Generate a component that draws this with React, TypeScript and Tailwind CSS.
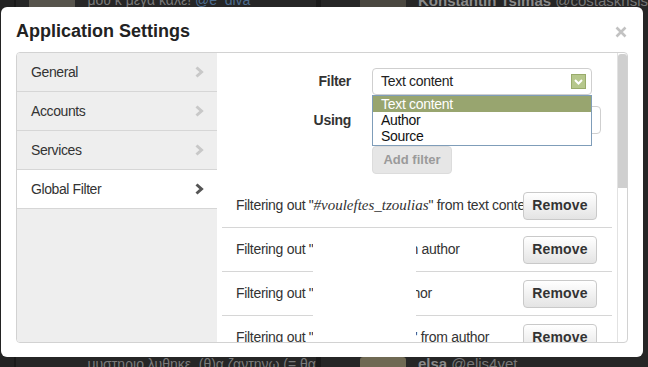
import React from 'react';

const font = "font-['Liberation_Sans',Arial,sans-serif]";

const menu = [
  { label: 'General', active: false },
  { label: 'Accounts', active: false },
  { label: 'Services', active: false },
  { label: 'Global Filter', active: true },
];

const filters = [
  { head: 'Filtering out "', term: '#vouleftes_tzoulias', tail: '" from text content', pad: '' },
  { head: 'Filtering out "', term: '', tail: 'n author', pad: 'pl-[97px]' },
  { head: 'Filtering out "', term: '', tail: 'hor', pad: 'pl-[99px]' },
  { head: 'Filtering out "', term: '', tail: '" from author', pad: 'pl-[99px]' },
];

const Chevron: React.FC<{ active: boolean }> = ({ active }) => (
  <svg width="9" height="12" viewBox="0 0 9 12">
    <path d="M1.5 1.5 L6.5 6 L1.5 10.5" fill="none" stroke={active ? '#555' : '#c8c8c8'} strokeWidth="3" />
  </svg>
);

const Avatar: React.FC<{ className?: string }> = ({ className }) => (
  <div className={`w-[46px] h-[46px] rounded-[3px] shrink-0 ${className ?? ''}`} />
);

const App: React.FC = () => {
  return (
    <div className={`relative w-[648px] h-[367px] overflow-hidden bg-[#1f1f1f] ${font}`}>
      {/* dimmed page behind the dialog */}
      <div className="flex h-full">
        <div className="w-[24px] bg-[#232323]" />
        <div className="w-[5px] bg-[#1a1a1a]" />
        <div className="w-[326px] bg-[#262626] flex flex-col justify-between">
          <div className="flex h-[7px] overflow-hidden">
            <Avatar className="ml-[13px] -mt-[34px] bg-[#57544c]" />
            <span className="ml-[12px] -mt-[7px] text-[14px] leading-[14px] text-[#7a7a7a] whitespace-nowrap">
              μου κ μεγα καλε! <span className="text-[#4d6d90]">@e_diva</span>
            </span>
          </div>
          <div className="flex h-[10px] overflow-hidden">
            <div className="w-[46px] ml-[13px] shrink-0" />
            <span className="ml-[12px] text-[14px] leading-[14px] text-[#7a7a7a] whitespace-nowrap">
              μυστηριο λυθηκε. (θ)α ζαντηνω (= θα
            </span>
          </div>
        </div>
        <div className="w-[9px] bg-[#1a1a1a]" />
        <div className="flex-1 bg-[#262626] flex flex-col justify-between">
          <div className="flex h-[7px] overflow-hidden">
            <Avatar className="ml-[39px] -mt-[34px] bg-[#4a4740]" />
            <span className="ml-[12px] -mt-[7px] text-[15px] leading-[15px] text-[#777] whitespace-nowrap">
              <b className="text-[#8a8a8a]">Konstantin Tsimas</b> @costaskrisis
            </span>
          </div>
          <div className="flex h-[10px] overflow-hidden">
            <Avatar className="ml-[39px] bg-[#6f6953]" />
            <span className="ml-[12px] text-[15px] leading-[14px] text-[#777] whitespace-nowrap">
              <b className="text-[#8a8a8a]">elsa</b> @elis4vet
            </span>
          </div>
        </div>
      </div>

      {/* dialog */}
      <div className="absolute left-[1px] top-[7px] w-[642px] h-[350px] bg-white rounded-[6px] flex flex-col">
        <div className="h-[45px] flex items-center justify-between pl-[15px] pr-[16px] pt-[4px]">
          <h1 className="text-[18px] font-bold text-[#222]">Application Settings</h1>
          <svg width="12" height="12" viewBox="0 0 12 12">
            <path d="M1.5 1.5 L10.5 10.5 M10.5 1.5 L1.5 10.5" stroke="#c2c2c2" strokeWidth="2.6" />
          </svg>
        </div>

        <div className="mx-[15px] h-[291px] border border-[#d2d2d2] rounded-[4px] flex overflow-hidden">
          {/* side menu */}
          <div className="w-[200px] shrink-0 bg-[#eeeeee] flex flex-col">
            {menu.map((m) => (
              <div
                key={m.label}
                className={`h-[39px] flex items-center justify-between pl-[14px] pr-[13px] border-b border-[#d6d6d6] ${
                  m.active ? 'bg-white' : ''
                }`}
              >
                <span className="text-[14px] tracking-[-0.4px] text-[#333]">{m.label}</span>
                <Chevron active={m.active} />
              </div>
            ))}
          </div>

          {/* content */}
          <div className="relative flex-1 min-w-0 flex overflow-hidden">
            <div className="flex-1 min-w-0 flex flex-col">
              <div className="flex flex-col pt-[15px] gap-[11px]">
                <div className="flex items-center">
                  <span className="w-[134px] text-right text-[14px] font-bold tracking-[-0.3px] text-[#333]">Filter</span>
                  <div className="ml-[21px] w-[220px] h-[27px] border border-[#cfcfcf] rounded-[4px] flex items-center justify-between pl-[8px] pr-[5px]">
                    <span className="text-[14px] tracking-[-0.3px] text-[#222]">Text content</span>
                    <div className="w-[15px] h-[15px] bg-[#b6c78c] border border-[#99ab6b] flex items-center justify-center">
                      <svg width="9" height="6" viewBox="0 0 9 6">
                        <path d="M1 1 L4.5 4.5 L8 1" fill="none" stroke="#fff" strokeWidth="2" />
                      </svg>
                    </div>
                  </div>
                </div>
                <div className="flex items-center">
                  <span className="w-[134px] text-right text-[14px] font-bold tracking-[-0.3px] text-[#333]">Using</span>
                  <div className="ml-[21px] w-[229px] h-[28px] border border-[#cfcfcf] rounded-[4px]" />
                </div>
                <div className="pl-[155px] pt-[1px]">
                  <div className="w-[80px] h-[28px] bg-[#e6e6e6] border border-[#dcdcdc] rounded-[4px] flex items-center justify-center text-[13px] font-bold text-[#9a9a9a]">
                    Add filter
                  </div>
                </div>
              </div>

              <div className="mt-[10px] ml-[5px] mr-[5px] flex flex-col">
                {filters.map((f, i) => (
                  <div key={i} className="h-[44px] shrink-0 border-b border-[#d6d6d6] flex items-center pl-[14px] pr-[15px]">
                    <div className="flex-1 min-w-0 overflow-hidden whitespace-nowrap text-[14px] tracking-[-0.3px] text-[#333]">
                      {f.head}
                      {f.term && <i className="font-['Liberation_Serif',serif] text-[15px] tracking-[0px]">{f.term}</i>}
                      <span className={f.pad}>{f.tail}</span>
                    </div>
                    <div className="w-[74px] h-[28px] shrink-0 border border-[#c9c9c9] rounded-[4px] bg-gradient-to-b from-white to-[#e4e4e4] flex items-center justify-center text-[14px] font-bold tracking-[0.2px] text-[#333]">
                      Remove
                    </div>
                  </div>
                ))}
              </div>
            </div>

            {/* scrollbar */}
            <div className="w-[10px] shrink-0 border-l border-[#e2e2e2] pt-[1px]">
              <div className="w-[9px] h-[134px] bg-[#cfcfcf] rounded-t-[3px]" />
            </div>

            {/* redacted patch */}
            <div className="absolute left-[96px] top-[184px] w-[103px] h-[120px] bg-white" />

            {/* open dropdown list */}
            <div className="absolute left-[155px] top-[42px] w-[220px] h-[51px] bg-white border border-[#7f9db9] flex flex-col text-[14px] leading-[16px] tracking-[-0.3px]">
              <div className="h-[16px] bg-[#98a56f] text-white pl-[8px]">Text content</div>
              <div className="h-[16px] text-[#111] pl-[8px]">Author</div>
              <div className="h-[16px] text-[#111] pl-[8px]">Source</div>
            </div>
          </div>
        </div>
      </div>
    </div>
  );
};

export default App;
